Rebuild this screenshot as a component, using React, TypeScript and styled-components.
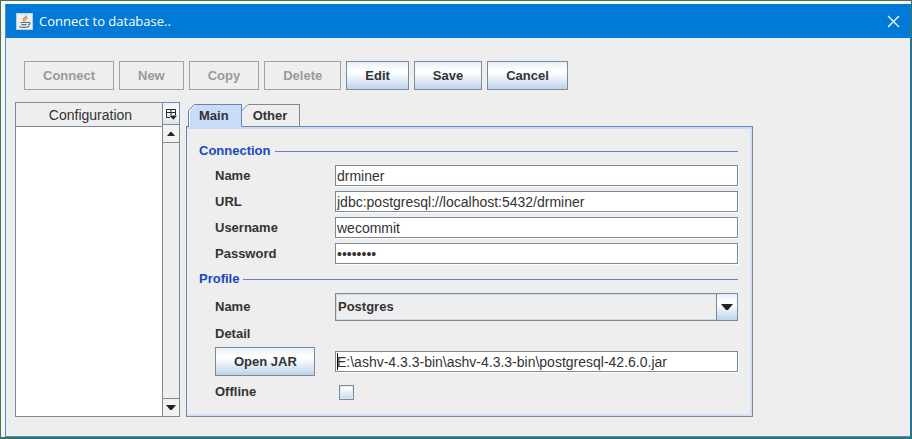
import React, { useId } from 'react';
import styled, { createGlobalStyle, css } from 'styled-components';

const steel = '#7a8a99';
const edge = '#6382bf';
const ink = '#333333';
const metal = 'linear-gradient(#e6eff8 0%, #ffffff 30%, #f8fbfe 45%, #bdd3e8 100%)';

const GlobalStyle = createGlobalStyle`
  *, *::before, *::after { box-sizing: border-box; }
  body {
    margin: 0;
    background: #f3f5ee;
    color: ${ink};
    font: bold 13px/16px "Liberation Sans", Arial, sans-serif;
  }
  button, input, select { font: inherit; color: inherit; margin: 0; }
`;

const Desktop = styled.div`
  min-height: 100vh;
  display: flex;
  padding: 3px 0 0 4px;
  border: 1px solid #4c6d5c;
  border-right-color: #2a7088;
  border-bottom: 2px solid #3b7268;
`;

const Dialog = styled.main`
  flex: 1;
  min-width: 0;
  background: #eeeeee;
  border: 1px solid #4a92cf;
  border-top: 0;
  border-right-color: #1f7d9f;
`;

const TitleBar = styled.header`
  display: flex;
  align-items: center;
  height: 34px;
  padding: 0 10px;
  background: #0079d7;
  color: #ffffff;
`;

const Title = styled.h1`
  flex: 1;
  margin: 0 0 0 6px;
  font: 13px/18px "Open Sans", "Noto Sans", sans-serif;
`;

const CloseButton = styled.button`
  display: flex;
  padding: 0;
  border: 0;
  background: none;
`;

const Toolbar = styled.div`
  display: flex;
  gap: 5px;
  padding: 23px 18px 12px;
`;

const Button = styled.button`
  height: 29px;
  padding: 0 18px;
  border: 1px solid ${steel};
  background: ${metal};
  white-space: nowrap;
  &:disabled {
    color: #999999;
    border-color: #a3a3a3;
    background: none;
  }
`;

const WideButton = styled(Button)`
  width: 100px;
`;

const Body = styled.div`
  display: grid;
  grid-template-columns: 165px minmax(0, 567px);
  gap: 6px;
  padding: 0 9px 19px;
`;

const ListPane = styled.section`
  display: flex;
  border: 1px solid ${steel};
  background: #ffffff;
`;

const ListTable = styled.table`
  flex: 1;
  align-self: flex-start;
  border-collapse: collapse;
`;

const HeadCell = styled.th`
  height: 23px;
  padding: 2px 0 0 3px;
  border-bottom: 1px solid ${steel};
  background: #eeeeee;
  font-weight: normal;
  font-size: 14px;
`;

const Scroller = styled.div`
  display: flex;
  flex-direction: column;
  justify-content: space-between;
  width: 17px;
  border-left: 1px solid ${steel};
  background: #eeeeee;
`;

const ScrollButton = styled.button<{ $kind: 'columns' | 'up' | 'down' }>`
  display: grid;
  place-items: center;
  width: 100%;
  height: 18px;
  padding: 0;
  border: 0 solid ${steel};
  background: #f2f2f2;
  ${({ $kind }) => $kind === 'columns' && css`
    height: 22px;
    border-bottom-width: 1px;
    background: linear-gradient(#eaf1f8, #ffffff 45%, #d5e3f0);
  `}
  ${({ $kind }) => $kind === 'up' && css`border-bottom-width: 1px;`}
  ${({ $kind }) => $kind === 'down' && css`border-top-width: 1px;`}
`;

const Tabs = styled.section`
  display: flex;
  flex-direction: column;
  padding-top: 2px;
`;

const TabList = styled.div`
  display: flex;
  margin-bottom: -1px;
  padding-left: 2px;
`;

const Tab = styled.button<{ $selected?: boolean }>`
  position: relative;
  height: 23px;
  padding: 0 12px 0 11px;
  border: 1px solid ${({ $selected }) => ($selected ? edge : steel)};
  border-left: 0;
  background: ${({ $selected }) => ($selected ? '#c8dbf9' : '#eeeeee')};
  ${({ $selected }) => $selected && css`
    z-index: 1;
    border-bottom-color: #c8dbf9;
  `}
`;

const Corner = styled.svg`
  position: absolute;
  left: 0;
  top: -1px;
`;

const Panel = styled.div`
  flex: 1;
  padding: 14px 14px 3px 10px;
  border: 1px solid ${edge};
  border-right-color: ${steel};
  border-bottom-color: ${steel};
  box-shadow: inset 0 2px #c8dbf9, inset -2px -2px #d3e0f1;
`;

const Group = styled.fieldset`
  display: flex;
  flex-direction: column;
  min-width: 0;
  margin: 0;
  padding: 0;
  border: 0;
`;

const Legend = styled.legend`
  display: flex;
  align-items: center;
  gap: 4px;
  width: 100%;
  padding: 0 0 0 2px;
  color: #1948c0;
  line-height: 20px;
  &::after {
    content: '';
    flex: 1;
    height: 1px;
    background: ${edge};
  }
`;

const Fields = styled.div<{ $profile?: boolean }>`
  display: grid;
  grid-template-columns: 120px minmax(0, 1fr);
  align-items: center;
  gap: 5px 0;
  padding: 4px 0 5px 18px;
  ${({ $profile }) => $profile && css`
    gap: 0;
    grid-template-rows: 28px 26px 29px 32px;
  `}
`;

const Wide = styled.div`
  grid-column: 1 / -1;
`;

const InputFrame = styled.div`
  position: relative;
  display: flex;
`;

const TextInput = styled.input`
  width: 100%;
  height: 21px;
  padding: 0 1px;
  border: 1px solid ${steel};
  box-shadow: 1px 1px #ffffff;
  border-radius: 0;
  background: #ffffff;
  font-weight: normal;
  font-size: 14px;
  outline: none;
`;

const Caret = styled.span`
  position: absolute;
  left: 2px;
  top: 2px;
  bottom: 2px;
  width: 1px;
  background: #000000;
`;

const SelectFrame = styled.div`
  position: relative;
  display: flex;
`;

const Select = styled.select`
  appearance: none;
  width: 100%;
  height: 28px;
  padding: 0 26px 0 2px;
  border: 1px solid ${steel};
  border-radius: 0;
  background: #eeeeee;
  box-shadow: inset 0 0 0 1px #c9daea;
`;

const SelectArrow = styled.span`
  position: absolute;
  right: 0;
  top: 0;
  bottom: 0;
  display: grid;
  place-items: center;
  width: 22px;
  border: 1px solid ${steel};
  background: ${metal};
  pointer-events: none;
`;

const CheckBox = styled.input`
  appearance: none;
  display: block;
  width: 15px;
  height: 15px;
  margin-left: 4px;
  border: 1px solid ${steel};
  background: linear-gradient(#ffffff 15%, #c4d7ea);
  box-shadow: inset 0 0 0 1px #dce8f4;
`;

function JavaIcon() {
  return (
    <svg width="17" height="17" viewBox="0 0 17 17" fill="none" aria-hidden="true">
      <rect x="0.5" y="0.5" width="16" height="16" fill="#eef0f2" stroke="#c5ced8" />
      <path d="M10.4 2.5C10.6 4.4 6.6 5 7.4 7L8.4 8.6M11.6 4.5C9.2 5.6 9 6.4 9.8 7.8" stroke="#df8b3b" strokeWidth="1.3" />
      <path d="M4.5 9.5H11.5M5.5 11.7H10.5M3.2 13.4C5.5 14.8 11 14.7 13.5 13.3M11.5 9.6C15 8.6 14.8 11.4 12 12" stroke="#4f6f88" strokeWidth="1.2" />
    </svg>
  );
}

function Triangle({ up = false, size = 10 }: { up?: boolean; size?: number }) {
  return (
    <svg width={size} height={size / 2} viewBox="0 0 10 5" aria-hidden="true">
      <path d={up ? 'M0 5H10L5.8 0H4.2Z' : 'M0 0H10L5.8 5H4.2Z'} fill="#222222" />
    </svg>
  );
}

function ColumnsIcon() {
  return (
    <svg width="12" height="12" viewBox="0 0 12 12" fill="none" aria-hidden="true">
      <path d="M5 9.5H1.5V1.5H10.5V7M1.5 4.5H10.5M6 1.5V7" stroke="#222222" />
      <path d="M4.5 7.5H12L8.3 11.8Z" fill="#222222" />
    </svg>
  );
}

function TabCorner({ selected = false }: { selected?: boolean }) {
  return (
    <Corner width="8" height="23" viewBox="0 0 8 23" fill="none" aria-hidden="true">
      <path d="M0 0H7L0 7Z" fill="#eeeeee" />
      <path d={selected ? 'M0.5 23V6.5L6.5 0.5H8' : 'M0 6.5L6 0.5H8'} stroke={selected ? edge : steel} />
      {selected && <path d="M1.5 23V7L7 1.5H8" stroke="#ffffff" />}
    </Corner>
  );
}

interface FieldProps {
  label: string;
  value: string;
  type?: string;
}

function Field({ label, value, type = 'text' }: FieldProps) {
  const id = useId();
  return (
    <>
      <label htmlFor={id}>{label}</label>
      <TextInput id={id} type={type} defaultValue={value} spellCheck={false} />
    </>
  );
}

const actions = [
  { label: 'Connect', disabled: true },
  { label: 'New', disabled: true },
  { label: 'Copy', disabled: true },
  { label: 'Delete', disabled: true },
  { label: 'Edit', disabled: false },
  { label: 'Save', disabled: false },
  { label: 'Cancel', disabled: false },
];

export default function App() {
  return (
    <Desktop>
      <GlobalStyle />
      <Dialog>
        <TitleBar>
          <JavaIcon />
          <Title>Connect to database..</Title>
          <CloseButton aria-label="Close">
            <svg width="13" height="13" viewBox="0 0 13 13" aria-hidden="true">
              <path d="M1 1L12 12M12 1L1 12" stroke="#ffffff" strokeWidth="1.3" />
            </svg>
          </CloseButton>
        </TitleBar>
        <Toolbar>
          {actions.map(({ label, disabled }) => (
            <Button key={label} disabled={disabled}>{label}</Button>
          ))}
        </Toolbar>
        <Body>
          <ListPane>
            <ListTable>
              <thead>
                <tr><HeadCell scope="col">Configuration</HeadCell></tr>
              </thead>
            </ListTable>
            <Scroller>
              <div>
                <ScrollButton $kind="columns" aria-label="Columns"><ColumnsIcon /></ScrollButton>
                <ScrollButton $kind="up" aria-label="Scroll up"><Triangle up size={8} /></ScrollButton>
              </div>
              <ScrollButton $kind="down" aria-label="Scroll down"><Triangle /></ScrollButton>
            </Scroller>
          </ListPane>
          <Tabs>
            <TabList role="tablist">
              <Tab role="tab" aria-selected $selected><TabCorner selected />Main</Tab>
              <Tab role="tab" aria-selected={false}><TabCorner />Other</Tab>
            </TabList>
            <Panel role="tabpanel">
              <Group>
                <Legend>Connection</Legend>
                <Fields>
                  <Field label="Name" value="drminer" />
                  <Field label="URL" value="jdbc:postgresql://localhost:5432/drminer" />
                  <Field label="Username" value="wecommit" />
                  <Field label="Password" value="wecommit" type="password" />
                </Fields>
              </Group>
              <Group>
                <Legend>Profile</Legend>
                <Fields $profile>
                  <label htmlFor="profile-name">Name</label>
                  <SelectFrame>
                    <Select id="profile-name" defaultValue="Postgres">
                      <option>Postgres</option>
                    </Select>
                    <SelectArrow><Triangle size={12} /></SelectArrow>
                  </SelectFrame>
                  <Wide>Detail</Wide>
                  <WideButton>Open JAR</WideButton>
                  <InputFrame>
                    <TextInput
                      aria-label="JAR file"
                      defaultValue="E:\ashv-4.3.3-bin\ashv-4.3.3-bin\postgresql-42.6.0.jar"
                      spellCheck={false}
                    />
                    <Caret />
                  </InputFrame>
                  <label htmlFor="offline">Offline</label>
                  <CheckBox id="offline" type="checkbox" />
                </Fields>
              </Group>
            </Panel>
          </Tabs>
        </Body>
      </Dialog>
    </Desktop>
  );
}
